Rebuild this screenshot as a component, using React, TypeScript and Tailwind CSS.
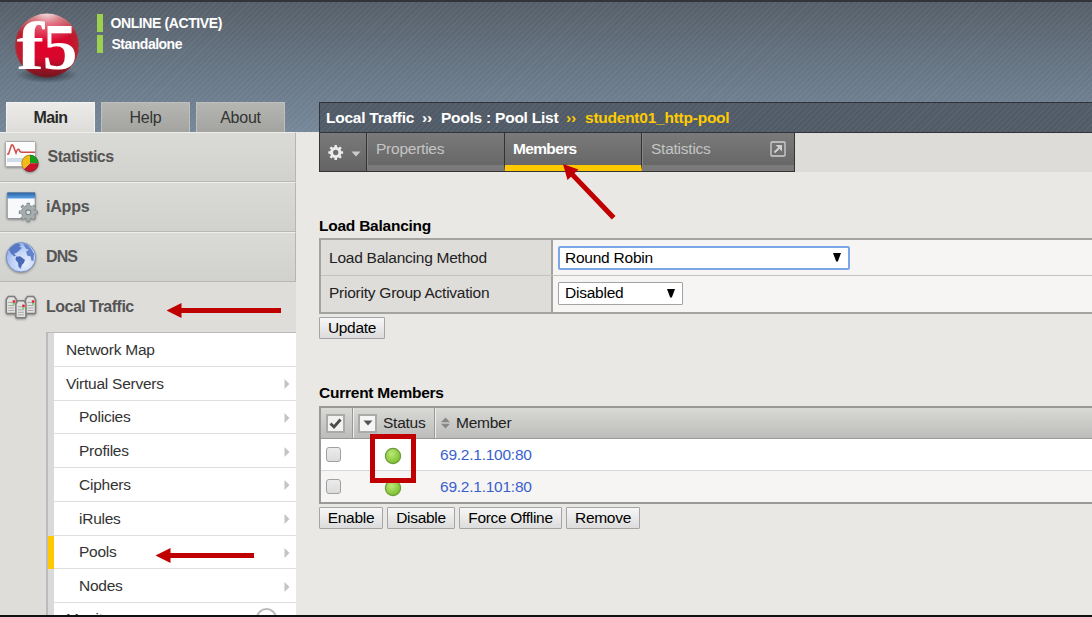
import React from 'react';

const menu = [
  { label: 'Network Map', sub: false, arrow: false },
  { label: 'Virtual Servers', sub: false, arrow: true },
  { label: 'Policies', sub: true, arrow: true },
  { label: 'Profiles', sub: true, arrow: true },
  { label: 'Ciphers', sub: true, arrow: true },
  { label: 'iRules', sub: true, arrow: true },
  { label: 'Pools', sub: true, arrow: true, active: true },
  { label: 'Nodes', sub: true, arrow: true },
];

const STRIPES =
  'bg-[repeating-linear-gradient(135deg,rgba(255,255,255,0.045)_0px,rgba(255,255,255,0.045)_1.5px,transparent_1.5px,transparent_4px)]';

function Logo() {
  return (
    <svg width="72" height="78" viewBox="0 0 72 78" className="block">
      <defs>
        <radialGradient id="ball" cx="0.5" cy="0.5" r="0.52">
          <stop offset="0" stopColor="#e4002b" />
          <stop offset="0.65" stopColor="#d20a2c" />
          <stop offset="0.9" stopColor="#b8202f" />
          <stop offset="1" stopColor="#9c4448" />
        </radialGradient>
        <radialGradient id="shine" cx="0.5" cy="-0.05" r="0.5" gradientTransform="translate(-0.1 0) scale(1.2 1)">
          <stop offset="0" stopColor="#fff" stopOpacity="0.95" />
          <stop offset="0.4" stopColor="#fff" stopOpacity="0.45" />
          <stop offset="1" stopColor="#fff" stopOpacity="0" />
        </radialGradient>
        <linearGradient id="dark" x1="0" y1="0" x2="0" y2="1">
          <stop offset="0.7" stopColor="#5a1018" stopOpacity="0" />
          <stop offset="1" stopColor="#5a1018" stopOpacity="0.75" />
        </linearGradient>
        <radialGradient id="shadow">
          <stop offset="0" stopColor="#222a33" stopOpacity="0.9" />
          <stop offset="1" stopColor="#222a33" stopOpacity="0" />
        </radialGradient>
      </defs>
      <ellipse cx="37" cy="65" rx="31" ry="8" fill="url(#shadow)" />
      <circle cx="37" cy="35.500" r="32" fill="url(#ball)" />
      <circle cx="37" cy="35.500" r="32" fill="url(#dark)" />
      <circle cx="37" cy="35.500" r="32" fill="url(#shine)" />
      <text transform="translate(6.5 58.500) scale(1.22 1)" fill="#fff" fontFamily="Liberation Serif, serif" fontWeight="700" fontSize="68">f</text>
      <text transform="translate(32.500 58.500) scale(1.06 1)" fill="#fff" fontFamily="Liberation Serif, serif" fontWeight="700" fontSize="66">5</text>
    </svg>
  );
}

function StatsIcon() {
  return (
    <svg width="36" height="34" viewBox="0 0 36 34" className="block drop-shadow-[0_1px_1px_rgba(0,0,0,0.35)]">
      <rect x="1.5" y="1.5" width="30" height="25" rx="1" fill="#fbfbfb" stroke="#aaa" />
      <rect x="3" y="18" width="27" height="4" fill="#cfdcea" />
      <path d="M3 14 H4.500 L7.500 5 Q9 4 10.500 9 L12 13 Q13.500 8 15 9.500 Q16 12.500 18 12.300 H31" fill="none" stroke="#cf4a4a" strokeWidth="1.5" />
      <path d="M26 23.300 V14.800 A8.500 8.500 0 0 1 34.500 23.300 Z" fill="#16a018" />
      <path d="M26 23.300 H34.500 A8.500 8.500 0 0 1 20 29.300 Z" fill="#c8142c" />
      <path d="M26 23.300 L20 29.300 A8.500 8.500 0 0 1 26 14.800 Z" fill="#f3bb18" />
      <circle cx="26" cy="23.300" r="8.200" fill="none" stroke="#333" strokeOpacity="0.35" />
    </svg>
  );
}

function GearShape({ cx, cy, r, fill, hole }: { cx: number; cy: number; r: number; fill: string; hole: string }) {
  return (
    <g>
      <circle cx={cx} cy={cy} r={r * 0.86} fill={fill} />
      {[0, 45, 90, 135].map((a) => (
        <rect key={a} x={cx - r * 0.2} y={cy - r * 1.13} width={r * 0.4} height={r * 2.26} rx="0.5" fill={fill} transform={`rotate(${a} ${cx} ${cy})`} />
      ))}
      <circle cx={cx} cy={cy} r={r * 0.4} fill={hole} />
    </g>
  );
}

function AppsIcon() {
  return (
    <svg width="36" height="34" viewBox="0 0 36 34" className="block drop-shadow-[0_1px_1px_rgba(0,0,0,0.35)]">
      <defs>
        <linearGradient id="bar" x1="0" y1="0" x2="0" y2="1">
          <stop offset="0" stopColor="#2b62a4" />
          <stop offset="1" stopColor="#5aa3e6" />
        </linearGradient>
      </defs>
      <rect x="3.200" y="3" width="28" height="25.500" rx="1" fill="#f8f9fb" stroke="#8b8d90" />
      <rect x="3.200" y="2.500" width="28" height="6" fill="url(#bar)" />
      <GearShape cx={24.300} cy={22.300} r={8.400} fill="#7e8688" hole="#7e8688" />
      <GearShape cx={24.300} cy={22.300} r={7.500} fill="#a5adae" hole="#7b8385" />
      <circle cx="24.300" cy="22.300" r="1.900" fill="#dcdfe0" />
    </svg>
  );
}

function GlobeIcon() {
  return (
    <svg width="36" height="34" viewBox="0 0 36 34" className="block drop-shadow-[0_1px_1px_rgba(0,0,0,0.35)]">
      <defs>
        <radialGradient id="sea" cx="0.65" cy="0.7" r="0.8">
          <stop offset="0" stopColor="#e8effc" />
          <stop offset="0.6" stopColor="#bdd0f5" />
          <stop offset="1" stopColor="#86a5e6" />
        </radialGradient>
      </defs>
      <g transform="translate(1 0.8)">
        <circle cx="16" cy="16.500" r="14.700" fill="url(#sea)" stroke="#7890c4" />
        <path d="M4 9 Q7 4 13 2.500 L16 4.500 L14 6 L17 7 L14 10 L11.500 12 L9 13 L11 15 L9 15.500 L6 13 Z" fill="#5878c4" />
        <path d="M11 16 L15 15.500 L20 19 L19 22 L17 24 L15.500 28 L13.500 26 L13 22 L10.500 19 Z" fill="#4a6ab8" />
        <path d="M18 3 L22 4 L26 8 L29 13 L28.500 20 L26.500 20 L25.500 15.500 L22.500 15 L21 11 L24 9 L21 8 Z" fill="#6284cc" />
      </g>
    </svg>
  );
}

function ServersIcon() {
  const server = (x: number, y: number) => (
    <g transform={`translate(${x} ${y})`}>
      <path d="M1 4 L3 1 H9 L11 4 V17 Q11 18 10 18 H2 Q1 18 1 17 Z" fill="#e2e2e1" stroke="#7d7d7d" strokeWidth="1.500" />
      <path d="M3 7 H7 M3 10 H9 M3 12.500 H9 M3 15 H9" stroke="#a9a9a9" strokeWidth="1" />
      <rect x="7.300" y="4.800" width="2.500" height="2.500" fill="#e22034" />
      <rect x="7.300" y="7.600" width="2.200" height="1.600" fill="#5fd05b" />
    </g>
  );
  return (
    <svg width="36" height="34" viewBox="0 0 36 34" className="block drop-shadow-[0_1px_1px_rgba(0,0,0,0.35)]">
      {server(1.300, 5.500)}
      {server(20.500, 5.500)}
      {server(10.900, 9.800)}
    </svg>
  );
}

function NavRow({ icon, label, open, cls }: { icon: React.ReactNode; label: string; open?: boolean; cls: string }) {
  return (
    <div className={open ? 'flex h-[50px] items-center pl-1' : 'flex h-[50px] items-center border-t border-r border-b border-t-[#eeeeec] border-r-[#b5b5b3] border-b-[#b8b8b6] bg-linear-to-b from-[#dadad7] to-[#d1d1ce] pl-1'}>
      {icon}
      <span className={cls}>{label}</span>
    </div>
  );
}

function Btn({ children, cls }: { children: string; cls: string }) {
  return (
    <button className={`flex h-[22px] items-center justify-center rounded-[1px] border border-[#a5a5a5] bg-linear-to-b from-[#f7f7f7] to-[#dcdcdc] text-[15.5px] leading-none tracking-[-0.3px] whitespace-nowrap text-black ${cls}`}>
      {children}
    </button>
  );
}

function Dot() {
  return (
    <svg width="18" height="18" viewBox="0 0 18 18" className="block">
      <defs>
        <radialGradient id="green" cx="0.4" cy="0.35" r="0.65">
          <stop offset="0" stopColor="#bce87a" />
          <stop offset="1" stopColor="#7cc02c" />
        </radialGradient>
      </defs>
      <circle cx="9" cy="9" r="7.600" fill="url(#green)" stroke="#6a9a3a" strokeWidth="1.200" />
    </svg>
  );
}

function Box() {
  return <div className="h-[15px] w-[15px] rounded-[3px] border border-[#a0a0a0] bg-linear-to-b from-[#ececec] to-[#dcdcdc]" />;
}

export default function App() {
  return (
    <div className="relative flex h-[617px] w-[1092px] flex-col overflow-hidden bg-[#e9e8e4] font-['Liberation_Sans',Arial,sans-serif] text-[15.5px] tracking-[-0.24px] text-[#222]">
      <header className="h-[132px] shrink-0 border-t-2 border-[#32343a] bg-linear-to-b from-[#565f69] via-[#687786] via-55% to-[#758799]">
        <div className={`flex h-full ${STRIPES}`}>
          <div className="pt-2 pl-[10px]">
            <Logo />
          </div>
          <div className="flex flex-col gap-[3px] pt-[12px] pl-[15px] text-[14px] font-bold text-white">
            <div className="flex h-[18px] items-center border-l-[6px] border-[#9dd04f] pl-[7.5px]">
              <span className="tracking-[-0.4px]">ONLINE (ACTIVE)</span>
            </div>
            <div className="flex h-[18px] items-center border-l-[6px] border-[#9dd04f] pl-[8.500px]">
              <span className="tracking-[-0.5px]">Standalone</span>
            </div>
          </div>
        </div>
      </header>

      <div className="flex min-h-0 flex-1">
        <aside className="-mt-[30px] flex w-[296px] shrink-0 flex-col">
          <div className="flex h-[30px] shrink-0 gap-[6px] pl-[6px] text-[16px] text-[#333]">
            <div className="flex w-[89px] items-center justify-center border border-b-0 border-[#f3f3f2] bg-linear-to-b from-[#ecebe9] to-[#dddcd9] font-bold tracking-[-0.6px] text-[#2a2a2a]">Main</div>
            <div className="flex w-[89px] items-center justify-center border border-b-0 border-[#bfbfbd] bg-linear-to-b from-[#b5b6b3] to-[#a3a49f]">Help</div>
            <div className="flex w-[89px] items-center justify-center border border-b-0 border-[#bfbfbd] bg-linear-to-b from-[#b5b6b3] to-[#a3a49f]">About</div>
          </div>
          <nav className="flex min-h-0 flex-1 flex-col bg-[#dedddA] text-[16px] font-bold tracking-[-0.5px] text-[#555]">
            <NavRow icon={<StatsIcon />} label="Statistics" cls="pl-[7.5px]" />
            <NavRow icon={<AppsIcon />} label="iApps" cls="pl-[6px] tracking-[-0.2px]" />
            <NavRow icon={<GlobeIcon />} label="DNS" cls="pl-[6px] tracking-[-0.9px]" />
            <NavRow icon={<ServersIcon />} label="Local Traffic" open cls="pl-[6px]" />
            <div className="ml-[46px] flex min-h-0 flex-1 flex-col overflow-hidden border-t border-l-2 border-[#bbbbbd] text-[15.5px] font-normal tracking-[-0.24px] text-[#333]">
              {menu.map((m) => (
                <div key={m.label} className="flex h-[33.75px] shrink-0">
                  <div className={m.active ? 'w-[6px] bg-[#ffc800]' : 'w-[6px] bg-[#dadadc]'} />
                  <div className={`flex flex-1 items-center justify-between border-b border-[#dededc] bg-white pr-[6px] ${m.sub ? 'pl-[25px]' : 'pl-[12px]'}`}>
                    <span>{m.label}</span>
                    {m.arrow && (
                      <svg width="6" height="10" viewBox="0 0 6 10" className="mt-0.5"><path d="M0.500 0 L5.500 5 L0.500 10 Z" fill="#c4c4c4" /></svg>
                    )}
                  </div>
                </div>
              ))}
              <div className="flex h-[34px] shrink-0">
                <div className="w-[6px] bg-[#dadadc]" />
                <div className="flex flex-1 items-start justify-between bg-white pr-[19px] pl-[12px]">
                  <span className="pt-[4px]">Monitors</span>
                  <div className="mt-[5px] h-[21px] w-[21px] rounded-full border-2 border-[#bbb]" />
                </div>
              </div>
            </div>
          </nav>
        </aside>

        <main className="-mt-[30px] flex min-w-0 flex-1 flex-col pl-[23px]">
          <div className="h-[31px] shrink-0 border border-r-0 border-[#30343a] bg-[#505b67]">
            <div className={`flex h-full items-center pl-[6px] font-bold whitespace-pre text-white ${STRIPES}`}>
              <span className="w-[96px]">Local Traffic</span>
              <span className="w-[19px]">››</span>
              <span className="w-[125px]">Pools : Pool List</span>
              <span className="w-[19px] text-[#ffcc00]">››</span>
              <span className="text-[#ffcc00]">student01_http-pool</span>
            </div>
          </div>
          <div className="flex h-[39px] shrink-0 bg-[#dddcd9]">
            <div className="flex w-[476px] border-r border-b border-l border-[#333] bg-linear-to-b from-[#7a7a7a] to-[#646464] text-[#c4c4c4]">
              <div className="flex w-[47px] items-center gap-[7px] border-r border-[#333] pl-[8px]">
                <svg width="16" height="17" viewBox="0 0 16 17"><GearShape cx={7.700} cy={8.500} r={6.600} fill="#ebebeb" hole="#6e6e6e" /></svg>
                <svg width="10" height="6" viewBox="0 0 10 6" className="mt-[3px]"><path d="M0.500 0.500 H9.500 L5 5.500 Z" fill="#ccc" /></svg>
              </div>
              <div className="w-[138px] border-r border-b-[6px] border-l border-r-[#333] border-b-[#7a7a7a] border-l-[#858585] pt-[4px] pl-[8px]">Properties</div>
              <div className="w-[137px] border-r border-b-[6px] border-r-[#333] border-b-[#ffc800] pt-[4px] pl-[8px] font-bold tracking-[-0.65px] text-white">Members</div>
              <div className="flex flex-1 items-start justify-between border-b-[6px] border-l border-b-[#7a7a7a] border-l-[#858585] pt-[4px] pr-[8px] pl-[8px]">
                Statistics
                <svg width="16" height="16" viewBox="0 0 16 16" className="mt-[4px]" fill="none" stroke="#d0d0d0">
                  <rect x="1" y="1" width="14" height="14" rx="1" strokeWidth="1.300" />
                  <path d="M4.500 11.500 L9 7" strokeWidth="2" /><path d="M5.500 4 H12 V10.500 Z" fill="#d0d0d0" stroke="none" />
                </svg>
              </div>
            </div>
          </div>

          <h2 className="mt-[44px] h-[22px] shrink-0 leading-[20px] font-bold text-black">Load Balancing</h2>
          <section className="shrink-0 border-2 border-r-0 border-[#a3a3a1] text-[#222]">
            <div className="flex h-[36px] border-b border-[#c2c2bf]">
              <div className="flex w-[232px] items-center border-r-2 border-[#a3a3a1] bg-[#dedddA] pl-2">Load Balancing Method</div>
              <div className="flex flex-1 items-center bg-[#f6f5f3] pl-[5px]">
                <div className="flex h-[24px] w-[292px] items-center justify-between rounded-[2px] border-2 border-[#7ba7e8] bg-white pr-[6px] pl-[5px] text-black">
                  Round Robin
                  <svg width="10" height="9" viewBox="0 0 10 9"><path d="M1 0 H9 L5.800 8.500 H4.200 Z" /></svg>
                </div>
              </div>
            </div>
            <div className="flex h-[36px]">
              <div className="flex w-[232px] items-center border-r-2 border-[#a3a3a1] bg-[#dedddA] pb-[2px] pl-2">Priority Group Activation</div>
              <div className="flex flex-1 items-center bg-[#f6f5f3] pb-[2px] pl-[5px]">
                <div className="flex h-[23px] w-[125px] items-center justify-between rounded-[1px] border border-[#a3a3a3] bg-white pr-[6px] pl-[6px] text-black">
                  Disabled
                  <svg width="10" height="9" viewBox="0 0 10 9"><path d="M1 0 H9 L5.800 8.500 H4.200 Z" /></svg>
                </div>
              </div>
            </div>
          </section>
          <div className="mt-[3px] flex shrink-0"><Btn cls="w-[66px]">Update</Btn></div>

          <h2 className="mt-[44px] h-[23px] shrink-0 leading-[20px] font-bold text-black">Current Members</h2>
          <section className="shrink-0 border-2 border-r-0 border-[#999997]">
            <div className="flex h-[31px] border-b border-[#999] bg-linear-to-b from-[#d9d9d6] to-[#bcbcba] text-[#222]">
              <div className="flex w-[32px] items-center border-r border-[#999] pl-[5px]">
                <div className="flex h-[19px] w-[19px] items-center justify-center border-2 border-[#aaa] bg-[#f1f1f0]">
                  <svg width="13" height="11" viewBox="0 0 13 11"><path d="M1.500 5.500 L5 9 L11.500 1.500" fill="none" stroke="#4a4a4a" strokeWidth="2.800" /></svg>
                </div>
              </div>
              <div className="flex w-[82px] items-center gap-[6px] border-r border-l border-r-[#999] border-l-[#eee] pl-[4px]">
                <div className="flex h-[19px] w-[19px] shrink-0 items-center justify-center border-2 border-[#aaa] bg-[#f5f5f4]">
                  <svg width="10" height="6" viewBox="0 0 10 6"><path d="M0.500 0.500 H9.500 L5 5.500 Z" fill="#555" /></svg>
                </div>
                Status
              </div>
              <div className="flex flex-1 items-center gap-[6px] border-l border-[#eee] pl-[5px]">
                <svg width="9" height="12" viewBox="0 0 9 12" fill="#888"><path d="M0 5.200 L4.500 0.500 L9 5.200 Z" /><path d="M0 6.800 L4.500 11.500 L9 6.800 Z" /></svg>
                Member
              </div>
            </div>
            {['69.2.1.100:80', '69.2.1.101:80'].map((ip, i) => (
              <div key={ip} className={i === 0 ? 'flex h-[32px] items-center border-b border-[#d6d6d4] bg-white' : 'flex h-[31px] items-center bg-[#f6f5f3]'}>
                <div className="w-[57px] pl-[5px]"><Box /></div>
                <div className="w-[62px] pt-[2px] pl-[6px]"><Dot /></div>
                <a className="pt-px text-[#3a5fcd]">{ip}</a>
              </div>
            ))}
          </section>
          <div className="mt-[3px] flex shrink-0 gap-[4px]">
            <Btn cls="w-[64px]">Enable</Btn>
            <Btn cls="w-[68px]">Disable</Btn>
            <Btn cls="w-[103px]">Force Offline</Btn>
            <Btn cls="w-[74px]">Remove</Btn>
          </div>
        </main>
      </div>

      <div className="absolute top-[434px] left-[370px] h-[49px] w-[46px] border-[5px] border-[#c00000]" />
      <svg className="pointer-events-none absolute inset-0" width="1092" height="617" viewBox="0 0 1092 617" fill="#c00000">
        <path d="M166.500 310.500 L181.500 303 V308 H281 V313 H181.500 V318 Z" />
        <path d="M155.500 555.500 L170.500 548 V553 H254 V558 H170.500 V563 Z" />
        <path d="M563 164 L578.500 169.500 L574.500 173.300 L615.500 216 L611.800 219.500 L571 176.800 L567.500 180 Z" />
      </svg>
      <div className="absolute inset-x-0 bottom-0 h-[2px] bg-[#111]" />
    </div>
  );
}
